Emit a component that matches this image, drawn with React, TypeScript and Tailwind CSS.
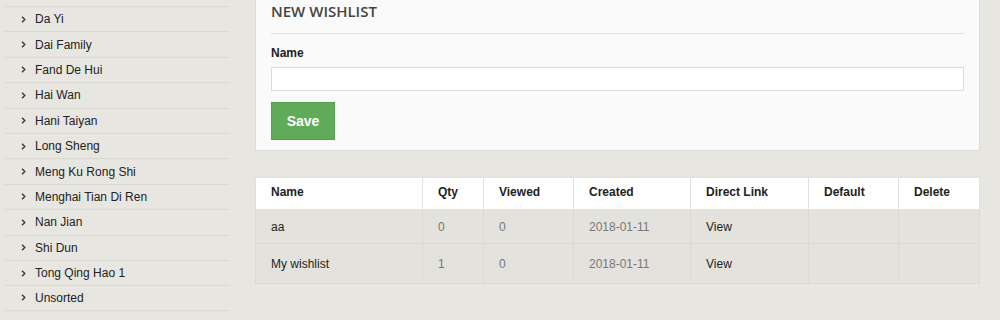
const categories = [
  'Da Yi',
  'Dai Family',
  'Fand De Hui',
  'Hai Wan',
  'Hani Taiyan',
  'Long Sheng',
  'Meng Ku Rong Shi',
  'Menghai Tian Di Ren',
  'Nan Jian',
  'Shi Dun',
  'Tong Qing Hao 1',
  'Unsorted',
]

const columns = [
  { label: 'Name', w: 'w-[167px]' },
  { label: 'Qty', w: 'w-[61px]' },
  { label: 'Viewed', w: 'w-[90px]' },
  { label: 'Created', w: 'w-[117px]' },
  { label: 'Direct Link', w: 'w-[118px]' },
  { label: 'Default', w: 'w-[90px]' },
  { label: 'Delete', w: 'w-[81px]' },
]

const wishlists = [
  { name: 'aa', qty: 0, viewed: 0, created: '2018-01-11', h: 'h-[34px]' },
  { name: 'My wishlist', qty: 1, viewed: 0, created: '2018-01-11', h: 'h-[40px]' },
]

function Chevron() {
  return (
    <svg width="5" height="7" viewBox="0 0 5 7" className="ml-[16px] mr-[9px] shrink-0">
      <path d="M1 0.8 L3.8 3.5 L1 6.2" fill="none" stroke="#333" strokeWidth="1.3" />
    </svg>
  )
}

function Sidebar() {
  return (
    <ul className="w-[225px] shrink-0 ml-[5px] pt-[6px]">
      {categories.map((c) => (
        <li
          key={c}
          className="flex h-[25.4px] items-center border-t border-[#d9d8d3] text-[12px] text-[#222] last:border-b"
        >
          <Chevron />
          <span>{c}</span>
        </li>
      ))}
    </ul>
  )
}

export default function App() {
  return (
    <div
      className="flex h-[320px] w-[1000px] overflow-hidden bg-[#e8e6e0]"
      style={{ fontFamily: '"Liberation Sans", Arial, sans-serif' }}
    >
      <Sidebar />
      <main className="ml-[25px] w-[725px]">
        <section className="border-b border-x border-[#dddcd7] bg-[#fafafa] px-[15px] pb-[10px]">
          <h2
            className="pt-[3px] pb-[14px] text-[15px] font-semibold leading-[16px] text-[#444] border-b border-[#dedede]"
            style={{ fontFamily: '"Open Sans", sans-serif' }}
          >
            NEW WISHLIST
          </h2>
          <label className="mt-[12px] block text-[12px] font-bold leading-[14px] text-[#222]">
            Name
          </label>
          <input
            type="text"
            className="mt-[7px] block h-[24px] w-full border border-[#dcdcdc] bg-white"
          />
          <button className="mt-[11px] h-[38px] w-[64px] border border-[#56a051] bg-[#5fab5a] text-[14px] font-bold text-white">
            Save
          </button>
        </section>

        <table className="mt-[26px] w-[725px] table-fixed border-collapse border border-[#dad9d4] text-[12px]">
          <thead>
            <tr className="h-[32px] bg-white">
              {columns.map((c) => (
                <th
                  key={c.label}
                  className={`${c.w} border border-[#e1e0dc] pl-[15px] pb-[3px] text-left font-bold text-[#222]`}
                >
                  {c.label}
                </th>
              ))}
            </tr>
          </thead>
          <tbody>
            {wishlists.map((w) => (
              <tr key={w.name} className={`${w.h} bg-black/[0.015]`}>
                <td className="border border-[#dad9d4] pl-[15px] text-[#222]">{w.name}</td>
                <td className="border border-[#dad9d4] pl-[15px] text-[#777]">{w.qty}</td>
                <td className="border border-[#dad9d4] pl-[15px] text-[#777]">{w.viewed}</td>
                <td className="border border-[#dad9d4] pl-[15px] text-[#777]">{w.created}</td>
                <td className="border border-[#dad9d4] pl-[15px] text-[#222]">View</td>
                <td className="border border-[#dad9d4]" />
                <td className="border border-[#dad9d4]" />
              </tr>
            ))}
          </tbody>
        </table>
      </main>
    </div>
  )
}
